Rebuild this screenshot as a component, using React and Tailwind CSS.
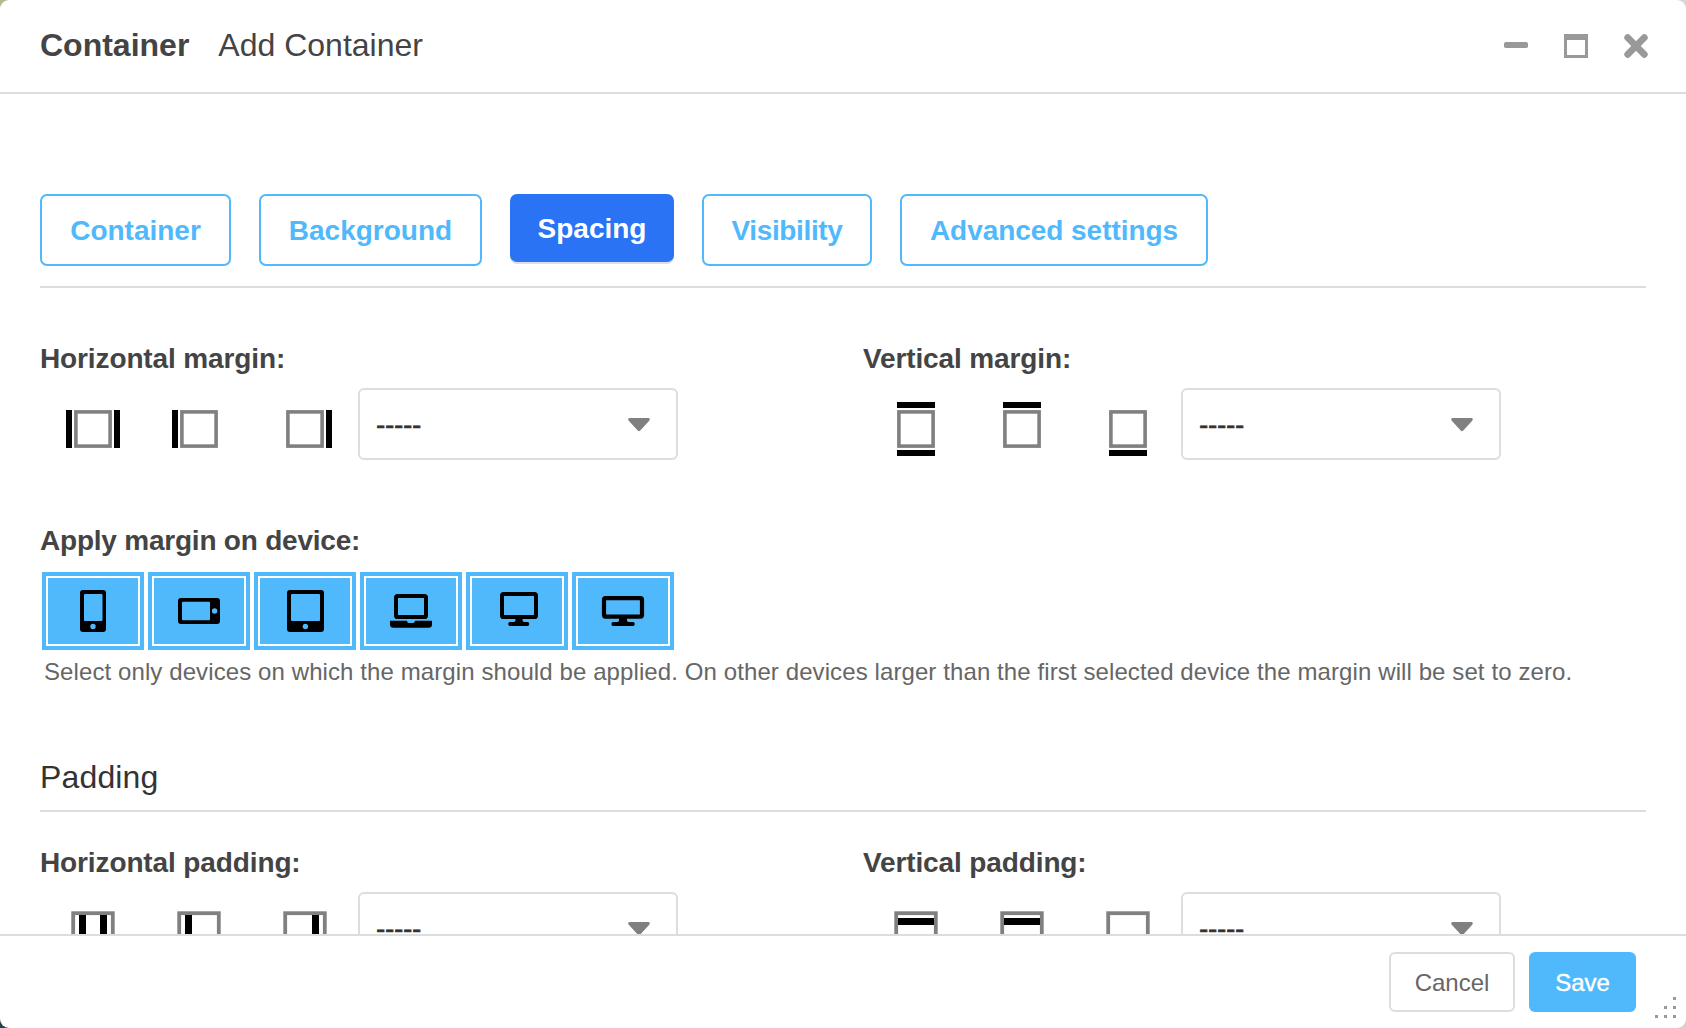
import React from "react";

const tabs = [
  { label: "Container", size: "w-[191px]" },
  { label: "Background", size: "w-[223px]" },
  { label: "Spacing", size: "w-[164px]", active: true },
  { label: "Visibility", size: "w-[170px] tracking-[-0.35px]" },
  { label: "Advanced settings", size: "w-[308px] tracking-[-0.05px]" },
];

function Tab({ label, size, active }) {
  const look = active
    ? "h-[68px] bg-[#2a73f4] text-white shadow-[0_2px_0_#dddde6]"
    : "h-[72px] border-2 border-[#50b9fb] text-[#50b9fb]";
  return (
    <button className={`${size} ${look} flex shrink-0 items-center justify-center whitespace-nowrap rounded-[7px] pt-[2px] text-[28px] font-bold`}>
      {label}
    </button>
  );
}

// Outlined square with bars outside its selected edges.
function MarginIcon({ sides }) {
  return (
    <svg width="102" height="72" viewBox="0 0 102 72" className="block shrink-0">
      <rect x="33.9" y="23.9" width="34.2" height="34.2" fill="none" stroke="#808080" strokeWidth="3.6" />
      {sides.includes("l") && <rect x="24" y="22" width="6" height="38" />}
      {sides.includes("r") && <rect x="72" y="22" width="6" height="38" />}
      {sides.includes("t") && <rect x="32" y="14" width="38" height="6" />}
      {sides.includes("b") && <rect x="32" y="62" width="38" height="6" />}
    </svg>
  );
}

// Outlined square with bars inside its selected edges.
function PaddingIcon({ sides }) {
  return (
    <svg width="102" height="72" viewBox="0 0 102 72" className="block shrink-0">
      <rect x="31.2" y="21.2" width="39.6" height="39.6" fill="none" stroke="#808080" strokeWidth="3.8" />
      {sides.includes("l") && <rect x="37" y="23" width="7" height="36" />}
      {sides.includes("r") && <rect x="58" y="23" width="7" height="36" />}
      {sides.includes("t") && <rect x="33" y="26" width="36" height="7" />}
      {sides.includes("b") && <rect x="33" y="49" width="36" height="7" />}
    </svg>
  );
}

function Select() {
  return (
    <div className="flex h-[72px] w-[320px] shrink-0 items-center justify-between rounded-[6px] border-2 border-[#dddddd] pl-4 pr-[26px] pt-[2px] text-[28px] text-[#333333]">
      <span className="tracking-[-0.3px] [-webkit-text-stroke:0.5px_#333333]">-----</span>
      <svg width="22" height="14" viewBox="0 0 22 14" className="block">
        <path d="M1.4 0H20.6Q22 .2 21.8 1.6Q21.7 2.2 21 2.9L12.3 12.5Q11 13.8 9.7 12.5L1 2.9Q.3 2.2 .2 1.6Q0 .2 1.4 0Z" fill="#808080" />
      </svg>
    </div>
  );
}

function Field({ label, Icon, options }) {
  return (
    <div className="w-[823px] shrink-0">
      <div className="h-10 text-[28px] font-bold leading-10 tracking-[-0.12px] text-[#444444]">{label}</div>
      <div className="mt-[9px] flex pl-[2px]">
        <div className="flex w-[316px] shrink-0 gap-1">
          {options.map((s) => (
            <Icon key={s} sides={s} />
          ))}
        </div>
        <Select />
      </div>
    </div>
  );
}

const deviceIcons = [
  <path key="phone" fillRule="evenodd" d="M41 18H61Q64 18 64 21V57Q64 60 61 60H41Q38 60 38 57V21Q38 18 41 18ZM43 22Q42 22 42 23V48Q42 49 43 49H59.5Q60.5 49 60.5 48V23Q60.5 22 59.5 22ZM51 51.8A2.7 2.7 0 1 0 51 57.2A2.7 2.7 0 1 0 51 51.8Z" />,
  <path key="landscape" fillRule="evenodd" d="M33 26H69Q72 26 72 29V49Q72 52 69 52H33Q30 52 30 49V29Q30 26 33 26ZM35 29.7Q34 29.7 34 30.7V47.2Q34 48.2 35 48.2H61Q62 48.2 62 47.2V30.7Q62 29.7 61 29.7ZM66.6 36.3A2.7 2.7 0 1 0 66.6 41.7A2.7 2.7 0 1 0 66.6 36.3Z" />,
  <path key="tablet" fillRule="evenodd" d="M36 18H67Q70 18 70 21V57Q70 60 67 60H36Q33 60 33 57V21Q33 18 36 18ZM38 22Q37 22 37 23V48Q37 49 38 49H65Q66 49 66 48V23Q66 22 65 22ZM51.4 51.8A2.7 2.7 0 1 0 51.4 57.2A2.7 2.7 0 1 0 51.4 51.8Z" />,
  <g key="laptop">
    <rect x="36" y="24" width="30" height="21" rx="1.6" fill="none" stroke="#000" strokeWidth="4" />
    <path d="M30 48.8H46.8Q47.5 51 49 51H53Q54.5 51 55.2 48.8H72V52.5Q72 55.8 68.5 55.8H33.5Q30 55.8 30 52.5Z" />
  </g>,
  <g key="desktop">
    <rect x="36" y="22" width="34" height="23" rx="1.6" fill="none" stroke="#000" strokeWidth="4" />
    <path d="M49.6 46H56.4Q56.4 49.9 58 49.9H61.5Q63.3 49.9 63.3 51.9Q63.3 53.9 61.5 53.9H44Q42.2 53.9 42.2 51.9Q42.2 49.9 44 49.9H48Q49.6 49.9 49.6 46Z" />
  </g>,
  <g key="wide">
    <rect x="32" y="26.2" width="38" height="18.5" rx="1.6" fill="none" stroke="#000" strokeWidth="4.2" />
    <path d="M47.2 46H54.8Q54.8 49.9 56.5 49.9H61Q62.8 49.9 62.8 51.9Q62.8 53.9 61 53.9H41.2Q39.4 53.9 39.4 51.9Q39.4 49.9 41.2 49.9H45.5Q47.2 49.9 47.2 46Z" />
  </g>,
];

function Device({ children }) {
  return (
    <button className="h-[78px] w-[102px] bg-[#50b9fb] p-1">
      <span className="block h-[70px] w-[94px] border-2 border-white">
        <svg width="102" height="78" viewBox="0 0 102 78" className="-ml-[6px] -mt-[6px] block max-w-none">
          {children}
        </svg>
      </span>
    </button>
  );
}

function Header() {
  return (
    <header className="flex h-[94px] shrink-0 items-center justify-between border-b-2 border-[#dddddd] pl-10 pr-[38px]">
      <h1 className="flex gap-[29px] pb-[2px] text-[32px] leading-10 text-[#444444]">
        <span className="font-bold">Container</span>
        <span>Add Container</span>
      </h1>
      <div className="flex gap-9 text-[#999999]">
        <svg width="24" height="24" viewBox="0 0 24 24" fill="currentColor">
          <rect y="8" width="24" height="6" rx="1.8" />
        </svg>
        <svg width="24" height="24" viewBox="0 0 24 24" fill="currentColor">
          <path fillRule="evenodd" d="M0 0H24V24H0ZM3 6V21H21V6Z" />
        </svg>
        <svg width="24" height="24" viewBox="0 0 24 24" stroke="currentColor" strokeWidth="6.8" strokeLinecap="round">
          <path d="M3.7 3.7L20.3 20.3M20.3 3.7L3.7 20.3" />
        </svg>
      </div>
    </header>
  );
}

export default function App() {
  return (
    <div className="h-[1028px] w-[1686px] overflow-hidden bg-[linear-gradient(90deg,#b9b88c_50%,#d6d6d6_50%),linear-gradient(90deg,#24414f_50%,#d2d2d2_50%)] bg-[length:100%_50%,100%_50%] bg-[position:top,bottom] bg-no-repeat font-['Liberation_Sans',Arial,sans-serif]">
      <div className="flex h-full flex-col overflow-hidden rounded-[9px] bg-white">
        <Header />
        <main className="h-[840px] shrink-0 overflow-hidden px-10 pt-[100px]">
          <nav className="flex h-[94px] items-start gap-[28px] border-b-2 border-[#dddddd]">
            {tabs.map((t) => (
              <Tab key={t.label} {...t} />
            ))}
          </nav>
          <div className="mt-[51px] flex">
            <Field label="Horizontal margin:" Icon={MarginIcon} options={["lr", "l", "r"]} />
            <Field label="Vertical margin:" Icon={MarginIcon} options={["tb", "t", "b"]} />
          </div>
          <div className="mt-[61px] h-10 text-[28px] font-bold leading-10 tracking-[-0.22px] text-[#444444]">Apply margin on device:</div>
          <div className="mt-[11px] flex gap-1 pl-[2px]">
            {deviceIcons.map((icon) => (
              <Device key={icon.key}>{icon}</Device>
            ))}
          </div>
          <p className="mt-[6px] h-8 whitespace-nowrap pl-1 text-[24px] leading-8 tracking-[0.097px] text-[#666666]">
            Select only devices on which the margin should be applied. On other devices larger than the first selected device the margin will be set to zero.
          </p>
          <h2 className="mt-[69px] h-[55px] border-b-2 border-[#dddddd] text-[32px] leading-10 tracking-[0.15px] text-[#333333]">Padding</h2>
          <div className="mt-[31px] flex">
            <Field label="Horizontal padding:" Icon={PaddingIcon} options={["lr", "l", "r"]} />
            <Field label="Vertical padding:" Icon={PaddingIcon} options={["tb", "t", "b"]} />
          </div>
        </main>
        <footer className="flex h-[94px] shrink-0 items-start justify-end border-t-2 border-[#dddddd] pr-[10px] pt-4 text-[24px]">
          <button className="h-[60px] w-[126px] rounded-[6px] border-2 border-[#dddddd] pt-[2px] text-[#666666]">Cancel</button>
          <button className="ml-[14px] h-[60px] w-[107px] rounded-[6px] bg-[#50b9fb] pt-[2px] text-white [-webkit-text-stroke:0.4px_white]">Save</button>
          <svg width="21" height="21" viewBox="0 0 21 21" fill="#999" className="ml-[19px] mt-[45px]">
            <path d="M18 0h3v3h-3zM9 9h3v3H9zM18 9h3v3h-3zM0 18h3v3H0zM9 18h3v3H9zM18 18h3v3h-3z" />
          </svg>
        </footer>
      </div>
    </div>
  );
}
